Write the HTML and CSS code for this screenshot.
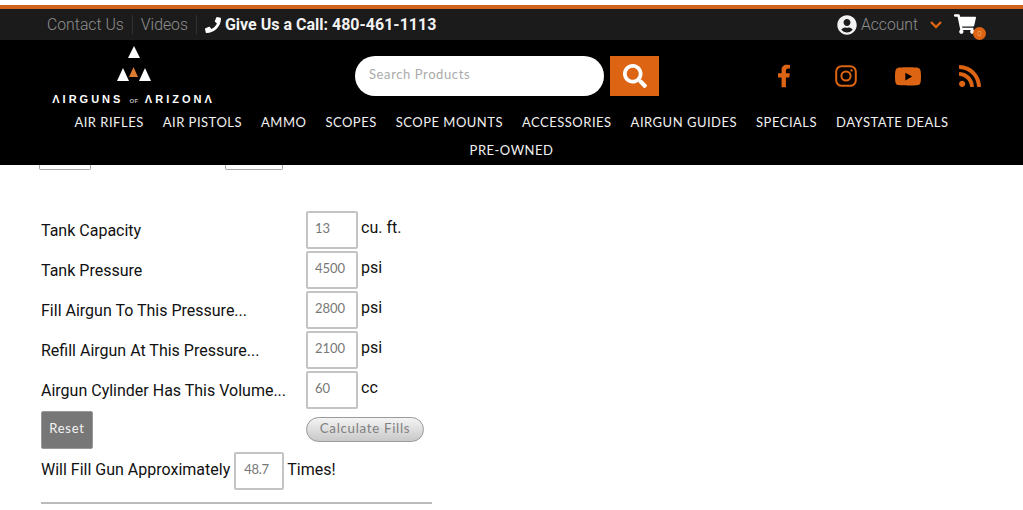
FILE: index.html
```html
<!DOCTYPE html>
<html lang="en">

<head>
    <meta charset="UTF-8">
    <meta name="viewport" content="width=device-width, initial-scale=1.0">
    <title>Airguns of Arizona - Tank Fill Calculator</title>
    <link rel="stylesheet" href="styles.css">
</head>

<body>
    <div class="topbar">
        <a class="top-link" href="#">Contact Us</a>
        <a class="top-link" href="#">Videos</a>
        <a class="call" href="#">
            <svg class="call-icon" viewBox="0 0 512 512"><path d="M493.4 24.6l-104-24c-11.3-2.6-22.9 3.3-27.5 13.9l-48 112c-4.2 9.8-1.4 21.3 6.9 28l60.6 49.6c-36 76.7-98.9 140.5-177.2 177.2l-49.6-60.6c-6.8-8.3-18.2-11.1-28-6.9l-112 48C3.9 366.5-2 378.1.6 389.4l24 104C27.1 504.2 36.7 512 48 512c256.1 0 464-207.5 464-464 0-11.2-7.7-20.9-18.6-23.4z"/></svg>
            Give Us a Call: 480-461-1113
        </a>
        <div class="account">
            <svg class="account-icon" viewBox="0 0 496 512"><path d="M248 8C111 8 0 119 0 256s111 248 248 248 248-111 248-248S385 8 248 8zm0 96c48.6 0 88 39.4 88 88s-39.4 88-88 88-88-39.4-88-88 39.4-88 88-88zm0 344c-58.7 0-111.3-26.6-146.5-68.2 18.8-35.4 55.6-59.8 98.5-59.8 2.4 0 4.8.4 7.1 1.1 13 4.2 26.6 6.9 40.9 6.9 14.3 0 28-2.7 40.9-6.9 2.3-.7 4.7-1.1 7.1-1.1 42.9 0 79.7 24.4 98.5 59.8C359.3 421.4 306.7 448 248 448z"/></svg>
            <span class="account-text">Account</span>
            <svg class="chevron" viewBox="0 0 14 9"><polyline points="2,2 7,7 12,2"/></svg>
            <div class="cart">
                <svg class="cart-icon" viewBox="0 0 576 512"><path d="M528.12 301.319l47.273-208C578.806 78.301 567.391 64 551.99 64H159.208l-9.166-44.81C147.758 8.021 137.93 0 126.529 0H24C10.745 0 0 10.745 0 24v16c0 13.255 10.745 24 24 24h69.883l70.248 343.435C147.325 417.1 136 435.222 136 456c0 30.928 25.072 56 56 56s56-25.072 56-56c0-15.674-6.447-29.835-16.824-40h209.647C430.447 426.165 424 440.326 424 456c0 30.928 25.072 56 56 56s56-25.072 56-56c0-22.172-12.888-41.332-31.579-50.405l5.517-24.276c3.413-15.018-8.002-29.319-23.403-29.319H218.117l-6.545-32h293.145c11.206 0 20.92-7.754 23.403-18.681z"/></svg>
                <span class="cart-count">0</span>
            </div>
        </div>
    </div>

    <div class="mainbar">
        <div class="brand-row">
            <a class="logo" href="#">
                <svg class="logo-mark" viewBox="0 0 36 36">
                    <polygon class="logo-white" points="18,0 24,12 12,12"/>
                    <polygon class="logo-white" points="7,22 13,35 1,35"/>
                    <polygon class="logo-orange" points="17.5,21 22,31 13,31"/>
                    <polygon class="logo-white" points="29,22 35,35 23,35"/>
                </svg>
                <span class="logo-text">ΛIRGUNS <small>OF</small> ΛRIZONΛ</span>
            </a>
            <form class="search">
                <input class="search-input" type="text" placeholder="Search Products">
                <button class="search-btn" type="button">
                    <svg viewBox="0 0 512 512"><path d="M505 442.7L405.3 343c-4.5-4.5-10.6-7-17-7H372c27.6-35.3 44-79.7 44-128C416 93.1 322.9 0 208 0S0 93.1 0 208s93.1 208 208 208c48.3 0 92.7-16.4 128-44v16.3c0 6.4 2.5 12.5 7 17l99.7 99.7c9.4 9.4 24.6 9.4 33.9 0l28.3-28.3c9.4-9.4 9.4-24.6.1-34zM208 336c-70.7 0-128-57.2-128-128 0-70.7 57.2-128 128-128 70.7 0 128 57.2 128 128 0 70.7-57.2 128-128 128z"/></svg>
                </button>
            </form>
            <div class="social">
                <svg class="social-fb" viewBox="0 0 320 512"><path d="M279.14 288l14.22-92.66h-88.91v-60.13c0-25.35 12.42-50.06 52.24-50.06h40.42V6.26S260.43 0 225.36 0c-73.22 0-121.08 44.38-121.08 124.72v70.62H22.89V288h81.39v224h100.17V288z"/></svg>
                <svg class="social-ig" viewBox="0 0 22 22">
                    <rect x="1.2" y="1.2" width="19.6" height="19.6" rx="5.5"/>
                    <circle cx="11" cy="11" r="4.6"/>
                    <circle class="social-dot" cx="16.6" cy="5.4" r="1.2"/>
                </svg>
                <svg class="social-yt" viewBox="15 64 546 384"><path d="M549.655 124.083c-6.281-23.65-24.787-42.276-48.284-48.597C458.781 64 288 64 288 64S117.22 64 74.629 75.486c-23.497 6.322-42.003 24.947-48.284 48.597-11.412 42.867-11.412 132.305-11.412 132.305s0 89.438 11.412 132.305c6.281 23.65 24.787 41.5 48.284 47.821C117.22 448 288 448 288 448s170.78 0 213.371-11.486c23.497-6.321 42.003-24.171 48.284-47.821 11.412-42.867 11.412-132.305 11.412-132.305s0-89.438-11.412-132.305zm-317.51 213.508V175.185l142.739 81.205-142.739 81.201z"/></svg>
                <svg class="social-rss" viewBox="0 32 448 448"><path d="M128.081 415.959c0 35.369-28.672 64.041-64.041 64.041S0 451.328 0 415.959s28.672-64.041 64.041-64.041 64.04 28.673 64.04 64.041zm175.66 47.25c-8.354-154.6-132.185-278.587-286.95-286.95C7.656 175.765 0 183.105 0 192.253v48.069c0 8.415 6.49 15.472 14.887 16.018 111.832 7.284 201.473 96.702 208.772 208.772.547 8.397 7.604 14.887 16.018 14.887h48.069c9.149.001 16.489-7.655 15.995-16.79zm144.249.288C439.596 229.677 251.465 40.445 16.503 32.01 7.473 31.686 0 38.981 0 48.016v48.068c0 8.625 6.835 15.645 15.453 15.999 191.179 7.839 344.627 161.316 352.465 352.465.353 8.618 7.373 15.453 15.999 15.453h48.068c9.034-.001 16.329-7.474 16.005-16.504z"/></svg>
            </div>
        </div>
        <nav class="nav">
            <a href="#">AIR RIFLES</a>
            <a href="#">AIR PISTOLS</a>
            <a href="#">AMMO</a>
            <a href="#">SCOPES</a>
            <a href="#">SCOPE MOUNTS</a>
            <a href="#">ACCESSORIES</a>
            <a href="#">AIRGUN GUIDES</a>
            <a href="#">SPECIALS</a>
            <a href="#">DAYSTATE DEALS</a>
            <a href="#">PRE-OWNED</a>
        </nav>
    </div>

    <div class="cut-row">
        <div class="cut-box cut-box-a"></div>
        <div class="cut-box cut-box-b"></div>
    </div>

    <form class="calc">
        <div class="calc-row">
            <label class="calc-label">Tank Capacity</label>
            <input class="calc-input" type="text" value="13">
            <span class="calc-unit">cu. ft.</span>
        </div>
        <div class="calc-row">
            <label class="calc-label">Tank Pressure</label>
            <input class="calc-input" type="text" value="4500">
            <span class="calc-unit">psi</span>
        </div>
        <div class="calc-row">
            <label class="calc-label">Fill Airgun To This Pressure...</label>
            <input class="calc-input" type="text" value="2800">
            <span class="calc-unit">psi</span>
        </div>
        <div class="calc-row">
            <label class="calc-label">Refill Airgun At This Pressure...</label>
            <input class="calc-input" type="text" value="2100">
            <span class="calc-unit">psi</span>
        </div>
        <div class="calc-row">
            <label class="calc-label">Airgun Cylinder Has This Volume...</label>
            <input class="calc-input" type="text" value="60">
            <span class="calc-unit">cc</span>
        </div>
        <div class="calc-row">
            <div class="calc-label">
                <button class="reset-btn" type="button">Reset</button>
            </div>
            <button class="calc-btn" type="button">Calculate Fills</button>
        </div>
        <div class="result-row">
            <span class="result-text">Will Fill Gun Approximately</span>
            <input class="calc-input result-input" type="text" value="48.7">
            <span class="result-text">Times!</span>
        </div>
        <hr class="calc-rule">
    </form>
</body>

</html>
```

FILE: styles.css
```css
body {
    margin: 0;
    padding-top: 5px;
    background-color: #fff;
    font-family: Roboto, sans-serif;
    color: #111;
    overflow: hidden;
}

.topbar {
    display: flex;
    align-items: center;
    height: 31px;
    padding-left: 47px;
    background-color: #1b1b1b;
    border-top: 4px solid #d0621c;
}

.top-link {
    color: #8f8f8f;
    font-size: 15.8px;
    font-weight: 300;
    text-decoration: none;
    padding-right: 8px;
    margin-right: 8px;
    border-right: 1px solid #333;
}

.call {
    display: flex;
    align-items: center;
    gap: 4px;
    color: #f2f2f2;
    font-size: 16px;
    font-weight: 700;
    text-decoration: none;
}

.call-icon {
    width: 16px;
    height: 16px;
    fill: #fff;
}

.account {
    display: flex;
    align-items: center;
    margin-left: auto;
    margin-right: 47px;
}

.account-icon {
    width: 20px;
    height: 20px;
    fill: #f2f2f2;
}

.account-text {
    margin-left: 4px;
    color: #8f8f8f;
    font-size: 15.7px;
    font-weight: 300;
}

.chevron {
    width: 14px;
    height: 9px;
    margin-left: 11px;
    fill: none;
    stroke: #dc6412;
    stroke-width: 2.4;
}

.cart {
    position: relative;
    width: 22px;
    height: 20px;
    margin-left: 11px;
    top: -1px;
}

.cart-icon {
    display: block;
    width: 22px;
    height: 20px;
    fill: #fff;
}

.cart-count {
    position: absolute;
    left: 19px;
    top: 13px;
    width: 13px;
    height: 13px;
    border-radius: 50%;
    background-color: #dc6412;
    color: #f0a060;
    font-size: 8px;
    line-height: 13px;
    text-align: center;
}

.mainbar {
    height: 125px;
    background-color: #000;
}

.brand-row {
    display: flex;
    height: 68px;
    padding-left: 53px;
}

.logo {
    display: flex;
    flex-direction: column;
    align-items: center;
    width: 161px;
    padding-top: 6px;
    color: #fff;
    text-decoration: none;
}

.logo-mark {
    display: block;
    width: 36px;
    height: 36px;
}

.logo-white {
    fill: #fff;
}

.logo-orange {
    fill: #dc7a30;
}

.logo-text {
    margin-top: 11px;
    font-family: "Liberation Sans", sans-serif;
    font-size: 11px;
    font-weight: 700;
    letter-spacing: 3px;
    line-height: 12px;
    white-space: nowrap;
}

.logo-text small {
    font-size: 6px;
    letter-spacing: 0.5px;
    color: #bbb;
}

.search {
    display: flex;
    gap: 6px;
    margin: 16px 0 0 141px;
}

.search-input {
    width: 249px;
    height: 40px;
    padding: 0 14px 5px;
    box-sizing: border-box;
    border: none;
    border-radius: 20px;
    background-color: #fff;
    font-family: Lato, sans-serif;
    font-size: 13px;
    letter-spacing: 0.6px;
}

.search-input::placeholder {
    color: #aaa;
}

.search-btn {
    display: flex;
    align-items: center;
    justify-content: center;
    width: 49px;
    height: 40px;
    padding: 0;
    border: none;
    background-color: #dc6412;
}

.search-btn svg {
    width: 24px;
    height: 24px;
    fill: #fff;
}

.social {
    display: flex;
    align-items: center;
    margin: 16px 0 0 118px;
    height: 40px;
    fill: #dc6412;
}

.social-fb {
    width: 14px;
    height: 24px;
}

.social-ig {
    width: 22px;
    height: 22px;
    margin-left: 44px;
    fill: none;
    stroke: #dc6412;
    stroke-width: 2;
}

.social .social-dot {
    fill: #dc6412;
    stroke: none;
}

.social-yt {
    width: 26px;
    height: 19px;
    margin-left: 38px;
}

.social-rss {
    width: 22px;
    height: 22px;
    margin-left: 38px;
}

.nav {
    display: flex;
    flex-wrap: wrap;
    justify-content: center;
    column-gap: 19px;
    padding: 0 60px;
    font-family: Lato, sans-serif;
    font-size: 13px;
    letter-spacing: 0.5px;
    line-height: 28px;
}

.nav a {
    color: #f0f0f0;
    text-decoration: none;
}

.cut-row {
    display: flex;
    height: 5px;
    padding-left: 39px;
}

.cut-box {
    box-sizing: border-box;
    height: 5px;
    border: 1px solid #aaa;
    border-top: none;
    border-radius: 0 0 2px 2px;
}

.cut-box-a {
    width: 52px;
}

.cut-box-b {
    width: 58px;
    margin-left: 134px;
}

.calc {
    width: 391px;
    margin: 41px 0 0 41px;
    font-size: 16px;
}

.calc-row {
    display: flex;
    height: 38px;
    margin-bottom: 2px;
}

.calc-label {
    width: 265px;
    flex-shrink: 0;
    line-height: 40px;
}

.calc-input {
    width: 52px;
    height: 38px;
    padding: 0 7px 4px;
    box-sizing: border-box;
    border: 2px solid #c4c4c4;
    border-radius: 2px;
    background-color: #fff;
    color: #777;
    font-family: Lato, sans-serif;
    font-size: 13px;
}

.calc-unit {
    margin-left: 3px;
    line-height: 34px;
}

.reset-btn {
    display: block;
    width: 52px;
    height: 38px;
    padding: 0 0 4px;
    border: 1px solid #999;
    border-radius: 2px;
    background-color: #777;
    color: #f4f4f4;
    font-family: Lato, sans-serif;
    font-size: 13px;
    letter-spacing: 0.8px;
}

.calc-btn {
    width: 118px;
    height: 25px;
    margin-top: 6px;
    padding: 0 0 3px;
    border: 1px solid #999;
    border-radius: 13px;
    background: linear-gradient(#f4f4f4, #c8c8c8);
    color: #808080;
    font-family: Lato, sans-serif;
    font-size: 13.3px;
    letter-spacing: 0.7px;
}

.result-row {
    display: flex;
    align-items: center;
    margin-top: 3px;
}

.result-text {
    padding-bottom: 4px;
}

.result-input {
    width: 50px;
    margin: 0 3px 0 4px;
    padding-left: 8px;
    letter-spacing: -0.3px;
}

.calc-rule {
    height: 2px;
    margin: 12px 0 0;
    border: none;
    background-color: #bbb;
}
```
